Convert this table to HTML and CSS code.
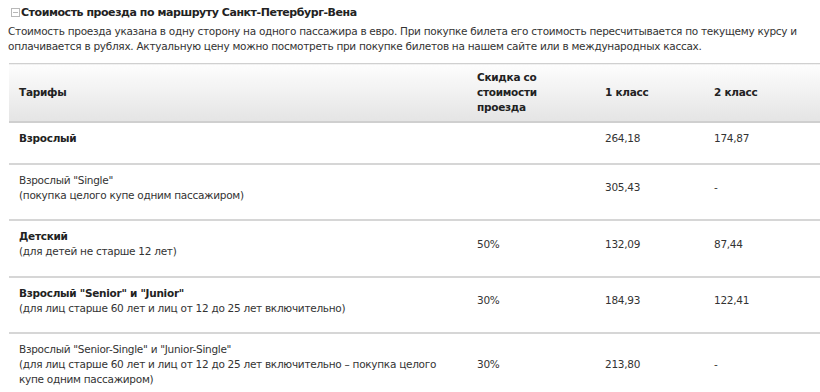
FILE: index.html
```html
<!DOCTYPE html>
<html lang="ru">
<head>
<meta charset="utf-8">
<link rel="stylesheet" href="styles.css">
</head>
<body>
<h2 class="title"><svg class="toggle" width="9" height="9" viewBox="0 0 9 9"><rect x="0.5" y="0.5" width="8" height="8" fill="#fff" stroke="#b8b8b8"/><line x1="2" y1="4.5" x2="7" y2="4.5" stroke="#b8b8b8"/></svg>Стоимость проезда по маршруту Санкт-Петербург-Вена</h2>
<p class="intro">Стоимость проезда указана в одну сторону на одного пассажира в евро. При покупке билета его стоимость пересчитывается по текущему курсу и оплачивается в рублях. Актуальную цену можно посмотреть при покупке билетов на нашем сайте или в международных кассах.</p>
<table class="fares">
<colgroup><col class="c1"><col class="c2"><col class="c3"><col class="c4"></colgroup>
<thead>
<tr><th>Тарифы</th><th>Скидка со<br>стоимости<br>проезда</th><th>1 класс</th><th>2 класс</th></tr>
</thead>
<tbody>
<tr><td><b>Взрослый</b></td><td></td><td>264,18</td><td>174,87</td></tr>
<tr><td>Взрослый "Single"<br>(покупка целого купе одним пассажиром)</td><td></td><td>305,43</td><td>-</td></tr>
<tr><td><b>Детский</b><br>(для детей не старше 12 лет)</td><td>50%</td><td>132,09</td><td>87,44</td></tr>
<tr><td><b>Взрослый "Senior" и "Junior"</b><br>(для лиц старше 60 лет и лиц от 12 до 25 лет включительно)</td><td>30%</td><td>184,93</td><td>122,41</td></tr>
<tr><td>Взрослый "Senior-Single" и "Junior-Single"<br>(для лиц старше 60 лет и лиц от 12 до 25 лет включительно – покупка целого купе одним пассажиром)</td><td>30%</td><td>213,80</td><td>-</td></tr>
</tbody>
</table>
</body>
</html>
```
FILE: styles.css
```css
body {
  margin: 4px 0 0 8px;
  font-family: "DejaVu Sans", Verdana, sans-serif;
  font-size: 10.5px;
  letter-spacing: -0.28px;
  color: #333;
  background: #fff;
}
.title {
  margin: 0;
  font-size: 11px;
  letter-spacing: -0.45px;
  line-height: 17px;
  font-weight: bold;
  color: #222;
  display: flex;
  align-items: center;
}
.toggle {
  margin: 0 1px 0 3px;
  flex: none;
}
.intro {
  margin: 3px 0 0 0;
  line-height: 14.5px;
  padding-right: 20px;
}
.fares {
  margin-top: 10px;
  width: 812px;
  border-collapse: collapse;
  table-layout: fixed;
  margin-left: 1px;
}
.c1 { width: 458px; }
.c2 { width: 128px; }
.c3 { width: 109px; }
.c4 { width: 117px; }
.fares th {
  text-align: left;
  font-weight: bold;
  color: #222;
  padding: 6px 10px 6px 10px;
  line-height: 15px;
  background: linear-gradient(#fdfdfd, #e4e4e4);
  border-top: 1px solid #d0d0d0;
  border-bottom: 2px solid #cfcfcf;
  vertical-align: middle;
}
.fares td {
  padding: 8px 10px 16.5px 10px;
  line-height: 15px;
  vertical-align: middle;
  border-bottom: 2px solid #d6d6d6;
}
.fares b { color: #222; }
```
